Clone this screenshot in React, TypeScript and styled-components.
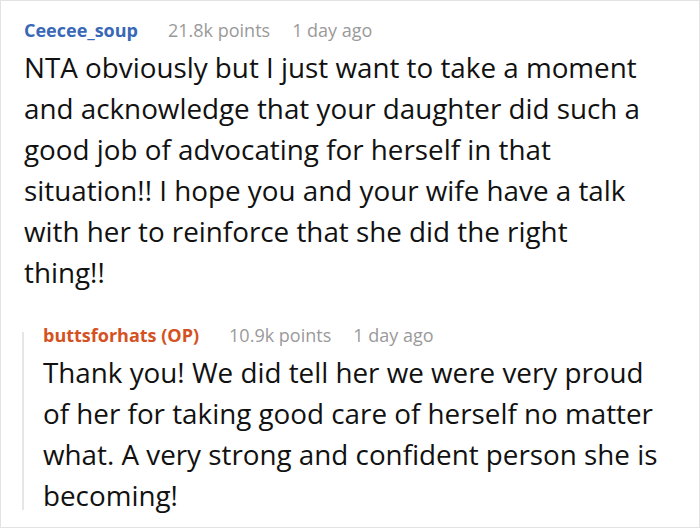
import styled, { createGlobalStyle } from "styled-components"

const Global = createGlobalStyle`
  html, body {
    margin: 0;
    padding: 0;
    background: #fff;
  }
  body {
    font-family: "Open Sans", "Noto Sans", sans-serif;
  }
`

const Card = styled.div`
  box-sizing: border-box;
  width: 700px;
  height: 528px;
  border: 1px solid #e3e3e3;
  padding: 16px 52px 0 23px;
`

const Meta = styled.div`
  display: flex;
  align-items: baseline;
  gap: 22px;
  font-size: 18px;
  line-height: 26px;
  white-space: nowrap;
`

const Author = styled.span<{ $op?: boolean }>`
  font-weight: 700;
  color: ${(p) => (p.$op ? "#d4521f" : "#3868b6")};
  margin-right: 8px;
`

const Faded = styled.span`
  color: #9a9a9a;
`

const Body = styled.p`
  margin: 4px 0 0;
  font-size: 27.8px;
  line-height: 41px;
  color: #111;
`

const Reply = styled.div`
  display: flex;
  gap: 19px;
  margin: 29px -20px 0 -2px;
`

const Rail = styled.div`
  flex: 0 0 2px;
  margin: 10px 0 6px;
  background: #e6e6e6;
`

const Thread = styled.div`
  flex: 1;
  min-width: 0;
`

type CommentProps = {
  author: string
  points: string
  time: string
  op?: boolean
  text: string
}

function Comment({ author, points, time, op, text }: CommentProps) {
  return (
    <>
      <Meta>
        <Author $op={op}>{author}</Author>
        <Faded>{points}</Faded>
        <Faded>{time}</Faded>
      </Meta>
      <Body>{text}</Body>
    </>
  )
}

export default function App() {
  return (
    <>
      <Global />
      <Card>
        <Comment
          author="Ceecee_soup"
          points="21.8k points"
          time="1 day ago"
          text="NTA obviously but I just want to take a moment and acknowledge that your daughter did such a good job of advocating for herself in that situation!! I hope you and your wife have a talk with her to reinforce that she did the right thing!!"
        />
        <Reply>
          <Rail />
          <Thread>
            <Comment
              op
              author="buttsforhats (OP)"
              points="10.9k points"
              time="1 day ago"
              text="Thank you! We did tell her we were very proud of her for taking good care of herself no matter what. A very strong and confident person she is becoming!"
            />
          </Thread>
        </Reply>
      </Card>
    </>
  )
}
